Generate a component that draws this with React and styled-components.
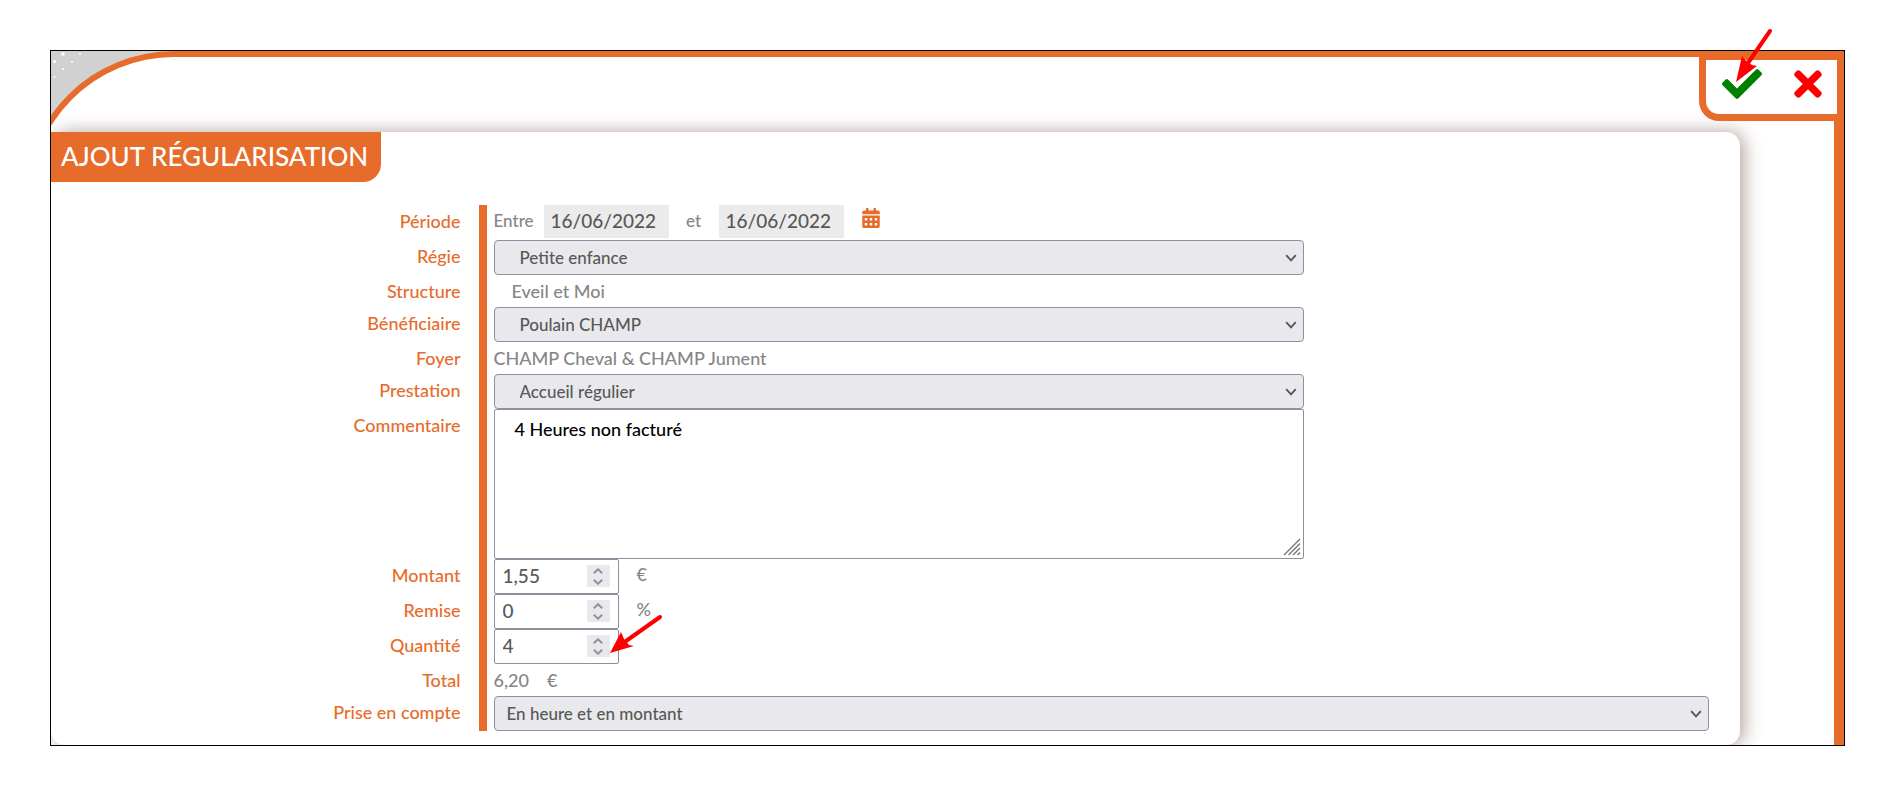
import React from "react";
import styled, { createGlobalStyle } from "styled-components";
import { FaCalendarAlt, FaCheck, FaTimes } from "react-icons/fa";

const ORANGE = "#e76b2a";
const BORDER = "#8f8f9d";
const FILL = "#e9e9ed";

function SelectField({ id, value, indent, full }) {
  return (
    <SelectWrap $full={full}>
      <Select id={id} defaultValue={value} $indent={indent}>
        <option value={value}>{value}</option>
      </Select>
      <Chevron viewBox="0 0 12 8" aria-hidden="true">
        <path d="M1.2 1.2 L6 6.4 L10.8 1.2" />
      </Chevron>
    </SelectWrap>
  );
}

function NumberField({ id, value, unit, children }) {
  return (
    <NumberRow>
      <NumberBox>
        <NumberInput id={id} inputMode="decimal" defaultValue={value} />
        <Spinner>
          <SpinButton type="button" aria-label="Augmenter">
            <svg width="10" height="6" viewBox="0 0 10 6">
              <path d="M0.8 5.2 L5 1.2 L9.2 5.2" />
            </svg>
          </SpinButton>
          <SpinButton type="button" aria-label="Diminuer">
            <svg width="10" height="6" viewBox="0 0 10 6">
              <path d="M0.8 0.8 L5 4.8 L9.2 0.8" />
            </svg>
          </SpinButton>
        </Spinner>
        {children}
      </NumberBox>
      {unit && <Unit>{unit}</Unit>}
    </NumberRow>
  );
}

function App() {
  return (
    <Page>
      <GlobalStyle />
      <Frame>
        <Stars width="60" height="40" viewBox="0 0 60 40" aria-hidden="true">
          <circle cx="12" cy="3" r="1.8" />
          <circle cx="29" cy="3" r="1" />
          <circle cx="3.5" cy="10.5" r="1.6" />
          <circle cx="21" cy="11" r="1" />
          <circle cx="12" cy="18" r="1" />
          <circle cx="3.5" cy="26" r="1" />
        </Stars>
        <Shell>
          <Header>
            <Actions>
              <ActionButton type="button" aria-label="Valider" $color="#008000">
                <FaCheck />
              </ActionButton>
              <ActionButton
                type="button"
                aria-label="Annuler"
                $color="#ff0000"
                $narrow
              >
                <FaTimes />
              </ActionButton>
            </Actions>
          </Header>
          <Card>
            <Title>AJOUT RÉGULARISATION</Title>
            <Form>
              <Label htmlFor="debut">Période</Label>
              <Field>
                <Period>
                  <Small>Entre</Small>
                  <DateInput id="debut" defaultValue="16/06/2022" />
                  <Small $center>et</Small>
                  <DateInput aria-label="Fin" defaultValue="16/06/2022" />
                  <CalendarButton type="button" aria-label="Calendrier">
                    <FaCalendarAlt />
                  </CalendarButton>
                </Period>
              </Field>

              <Label htmlFor="regie">Régie</Label>
              <Field>
                <SelectField id="regie" value="Petite enfance" indent />
              </Field>

              <Label as="span">Structure</Label>
              <Field>
                <Text $indent>Eveil et Moi</Text>
              </Field>

              <Label htmlFor="beneficiaire">Bénéficiaire</Label>
              <Field>
                <SelectField id="beneficiaire" value="Poulain CHAMP" indent />
              </Field>

              <Label as="span">Foyer</Label>
              <Field>
                <Text>CHAMP Cheval &amp; CHAMP Jument</Text>
              </Field>

              <Label htmlFor="prestation">Prestation</Label>
              <Field>
                <SelectField id="prestation" value="Accueil régulier" indent />
              </Field>

              <Label htmlFor="commentaire">Commentaire</Label>
              <Field>
                <AreaWrap>
                  <Area id="commentaire" defaultValue="4 Heures non facturé" />
                  <Grip viewBox="0 0 18 18" aria-hidden="true">
                    <path d="M1 17 L17 1 M5.5 17 L17 5.5 M10 17 L17 10 M14.5 17 L17 14.5" />
                  </Grip>
                </AreaWrap>
              </Field>

              <Label htmlFor="montant">Montant</Label>
              <Field>
                <NumberField id="montant" value="1,55" unit="€" />
              </Field>

              <Label htmlFor="remise">Remise</Label>
              <Field>
                <NumberField id="remise" value="0" unit="%" />
              </Field>

              <Label htmlFor="quantite">Quantité</Label>
              <Field>
                <NumberField id="quantite" value="4">
                  <FieldArrow viewBox="0 0 54 40" aria-hidden="true">
                    <path d="M51 3 L17 27" />
                    <polygon points="1,39 12,18 15,25 20,31 25,32" />
                  </FieldArrow>
                </NumberField>
              </Field>

              <Label as="span">Total</Label>
              <Field>
                <Text>
                  <span>6,20</span>
                  <span>€</span>
                </Text>
              </Field>

              <Label htmlFor="compte">Prise en compte</Label>
              <Field>
                <SelectField id="compte" value="En heure et en montant" full />
              </Field>
            </Form>
          </Card>
        </Shell>
      </Frame>
      <ActionArrow viewBox="0 0 40 56" aria-hidden="true">
        <path d="M35 3 L13 35" />
        <polygon points="1,54 7,28 10,32 17,37 22,38" />
      </ActionArrow>
    </Page>
  );
}

export default App;

const GlobalStyle = createGlobalStyle`
  * {
    box-sizing: border-box;
  }
  body {
    margin: 0;
    background: #fff;
  }
  body, button, input, select, textarea {
    font-family: Lato, "Liberation Sans", sans-serif;
    font-size: 18px;
    font-weight: 500;
  }
`;

const Page = styled.main`
  position: relative;
  padding: 50px;
`;

const Frame = styled.div`
  position: relative;
  overflow: hidden;
  border: 1px solid #000;
  background: #d1d1d1;
`;

const Stars = styled.svg`
  position: absolute;
  top: 0;
  left: 0;
  fill: #fff;
`;

/* the rounded corner starts outside of the frame */
const Shell = styled.div`
  position: relative;
  margin-left: -27px;
  padding-left: 21px;
  border: solid ${ORANGE};
  border-width: 6px 10px 0 6px;
  border-top-left-radius: 150px;
  background: #fff;
`;

const Header = styled.header`
  display: flex;
  justify-content: flex-end;
  height: 75px;
`;

const Actions = styled.div`
  display: flex;
  align-items: flex-start;
  gap: 32px;
  height: 64px;
  margin-right: -10px;
  padding: 4px 15px 0 16px;
  border: solid ${ORANGE};
  border-width: 3px 7px 7px;
  border-bottom-left-radius: 20px;
  background: #fff;
`;

const ActionButton = styled.button`
  display: flex;
  justify-content: center;
  width: ${(props) => (props.$narrow ? "28px" : "40px")};
  padding: 0;
  border: 0;
  background: none;
  color: ${(props) => props.$color};
  font-size: 40px;
  cursor: pointer;

  svg {
    flex: none;
  }
`;

const Card = styled.section`
  margin-right: 94px;
  padding-bottom: 14px;
  border-radius: 14px;
  background: #fff;
  box-shadow: 4px 0 18px rgba(90, 50, 40, 0.45);
`;

const Title = styled.h1`
  width: fit-content;
  margin: 0 0 23px;
  padding: 0 13px 2px 10px;
  border-bottom-right-radius: 18px;
  background: ${ORANGE};
  color: #fff;
  font-size: 26px;
  font-weight: 500;
  line-height: 48px;
`;

const Form = styled.form`
  display: grid;
  grid-template-columns: 25% 1fr;
  padding-right: 31px;
`;

const Label = styled.label`
  padding-right: 5px;
  color: ${ORANGE};
  line-height: 32px;
  text-align: right;
`;

const Field = styled.div`
  margin-left: 13px;
  padding-left: 7px;
  border-left: 8px solid ${ORANGE};
`;

const Period = styled.div`
  display: flex;
  align-items: flex-start;
  height: 35px;
`;

const Small = styled.span`
  width: 50px;
  text-align: ${(props) => (props.$center ? "center" : "left")};
  color: #868686;
  font-size: 17px;
  line-height: 32px;
`;

const DateInput = styled.input`
  width: 125px;
  height: 33px;
  padding: 0 7px 2px;
  border: 0;
  background: #ebebeb;
  color: #585858;
  font-size: 19px;
`;

const CalendarButton = styled.button`
  display: flex;
  margin: 3px 0 0 17px;
  padding: 0;
  border: 0;
  background: none;
  color: ${ORANGE};
  font-size: 20px;
  cursor: pointer;
`;

const SelectWrap = styled.div`
  position: relative;
  width: ${(props) => (props.$full ? "100%" : "66.667%")};
`;

const Select = styled.select`
  display: block;
  width: 100%;
  height: 35px;
  padding: 0 ${(props) => (props.$indent ? "25px" : "12px")};
  border: 1px solid ${BORDER};
  border-radius: 4px;
  appearance: none;
  background: ${FILL};
  color: #585858;
  font-size: 17px;
`;

const Chevron = styled.svg`
  position: absolute;
  top: 14px;
  right: 7px;
  width: 12px;
  height: 8px;
  fill: none;
  stroke: #585858;
  stroke-width: 1.9;
  pointer-events: none;
`;

const Text = styled.div`
  display: flex;
  gap: 18px;
  padding-left: ${(props) => (props.$indent ? "18px" : "0")};
  color: #868686;
  line-height: 32px;
`;

const AreaWrap = styled.div`
  position: relative;
  width: 66.667%;
`;

const Area = styled.textarea`
  display: block;
  width: 100%;
  height: 150px;
  padding: 8px 20px;
  border: 1px solid ${BORDER};
  border-radius: 2px;
  color: #000;
  resize: none;
`;

const Grip = styled.svg`
  position: absolute;
  right: 3px;
  bottom: 3px;
  width: 18px;
  height: 18px;
  fill: none;
  stroke: #777;
  stroke-width: 1.4;
`;

const NumberRow = styled.div`
  display: flex;
  gap: 18px;
`;

const NumberBox = styled.div`
  position: relative;
`;

const NumberInput = styled.input`
  display: block;
  width: 125px;
  height: 35px;
  padding: 0 36px 2px 8px;
  border: 1px solid ${BORDER};
  border-radius: 2px;
  background: #fff;
  color: #585858;
  font-size: 19px;
`;

const Spinner = styled.div`
  position: absolute;
  top: 6px;
  right: 9px;
  display: flex;
  flex-direction: column;
  background: ${FILL};
`;

const SpinButton = styled.button`
  display: flex;
  align-items: center;
  justify-content: center;
  width: 23px;
  height: 11px;
  padding: 0;
  border: 0;
  background: none;

  svg {
    fill: none;
    stroke: ${BORDER};
    stroke-width: 1.9;
  }
`;

const Unit = styled.span`
  color: #868686;
  line-height: 30px;
`;

const FieldArrow = styled.svg`
  position: absolute;
  top: -15px;
  left: 115px;
  width: 54px;
  height: 40px;
  fill: #f00;
  pointer-events: none;

  path {
    stroke: #f00;
    stroke-width: 4;
    stroke-linecap: round;
  }
`;

const ActionArrow = styled.svg`
  position: absolute;
  top: 28px;
  right: 120px;
  width: 40px;
  height: 56px;
  fill: #f00;
  pointer-events: none;

  path {
    stroke: #f00;
    stroke-width: 4;
    stroke-linecap: round;
  }
`;
